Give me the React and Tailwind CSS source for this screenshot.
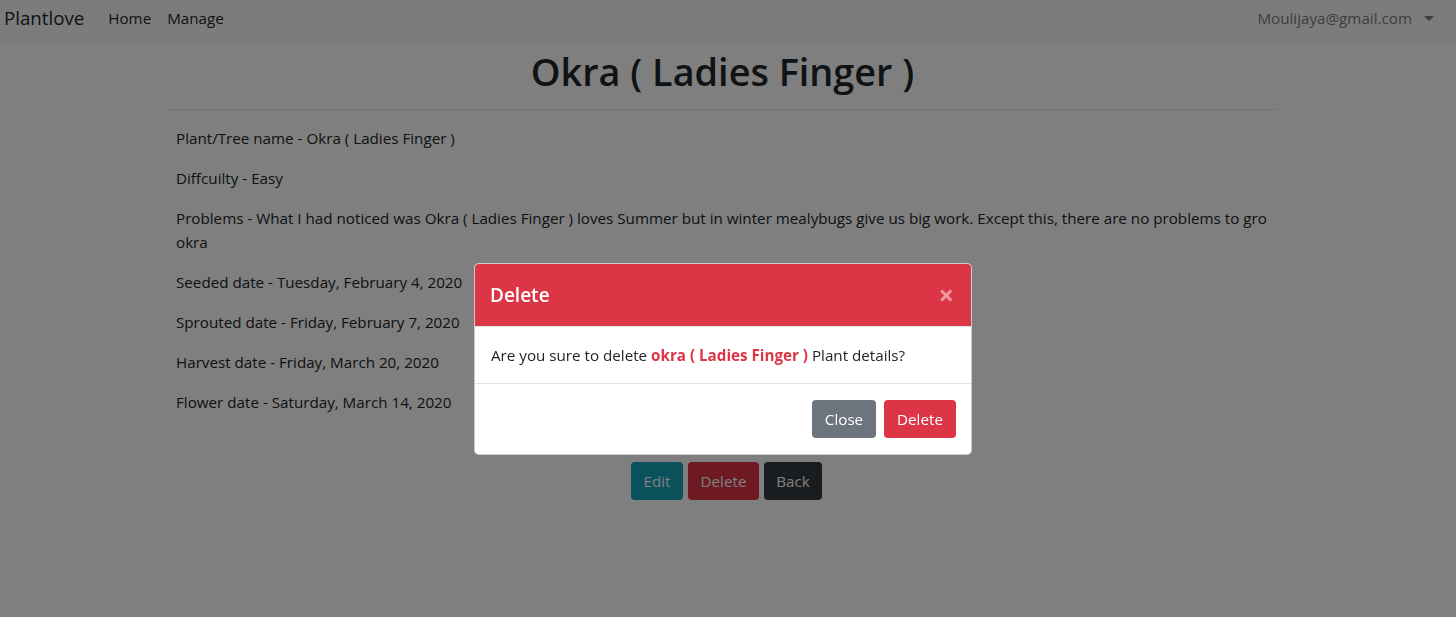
export default function App() {
  const rows = [
    "Plant/Tree name - Okra ( Ladies Finger )",
    "Diffcuilty - Easy",
  ];
  const dates = [
    "Seeded date - Tuesday, February 4, 2020",
    "Sprouted date - Friday, February 7, 2020",
    "Harvest date - Friday, March 20, 2020",
    "Flower date - Saturday, March 14, 2020",
  ];
  return (
    <div className="relative min-h-[617px] bg-white font-['Open_Sans',sans-serif] text-[15.2px] leading-[24px] text-[#212529]">
      <nav className="flex h-[44px] items-center bg-[#f8f9fa] pb-[8px] pl-[4px] pr-[22px]">
        <span className="text-[18.7px] leading-[30px] text-[#212529]">Plantlove</span>
        <span className="ml-[24px] text-[#212529]">Home</span>
        <span className="ml-[16px] text-[#212529]">Manage</span>
        <div className="ml-auto flex items-center text-[#7c7c7c]">
          <span>Moulijaya@gmail.com</span>
          <span className="ml-[12px] mt-[1px] h-0 w-0 border-x-[5px] border-t-[5px] border-x-transparent border-t-[#7c7c7c]"></span>
        </div>
      </nav>

      <div className="ml-[168px] w-[1109px]">
        <h1 className="mt-[4px] text-center text-[37.8px] font-semibold leading-[48px]">Okra ( Ladies Finger )</h1>
        <div className="mt-[13px] h-px bg-[#e6e6e6]"></div>
        <div className="px-[8px] pt-[16px]">
          {rows.map((r) => (
            <p key={r} className="mb-[16px]">{r}</p>
          ))}
          <p className="mb-[16px]">
            <span className="whitespace-nowrap">Problems - What I had noticed was Okra ( Ladies Finger ) loves Summer but in winter mealybugs give us big work. Except this, there are no problems to gro</span>
            <br />
            okra
          </p>
          {dates.map((r) => (
            <p key={r} className="mb-[16px]">{r}</p>
          ))}
        </div>
        <div className="mt-[48px] flex justify-center gap-[5px] pl-[8px]">
          <button className="h-[38px] w-[52px] rounded-[4px] bg-[#17a2b8] text-white">Edit</button>
          <button className="h-[38px] w-[71px] rounded-[4px] bg-[#dc3545] text-white">Delete</button>
          <button className="h-[38px] w-[58px] rounded-[4px] bg-[#343a40] text-white">Back</button>
        </div>
      </div>

      <div className="fixed inset-0 bg-black/50"></div>

      <div className="fixed left-[474px] top-[263px] w-[498px] overflow-hidden rounded-[5px] border border-black/20 bg-white">
        <div className="flex h-[63px] items-center justify-between border-b border-[#dee2e6] bg-[#dc3545] pl-[15px] pr-[17px]">
          <span className="text-[19px] font-semibold leading-[30px] text-white">Delete</span>
          <span className="text-[27px] font-bold leading-[24px] text-white/50">×</span>
        </div>
        <div className="border-b border-[#dee2e6] px-[16px] py-[16px]">
          Are you sure to delete <span className="font-bold text-[#dc3545]">okra ( Ladies Finger )</span> Plant details?
        </div>
        <div className="flex justify-end gap-[8px] px-[15px] pb-[16px] pt-[16px]">
          <button className="h-[38px] w-[64px] rounded-[4px] bg-[#6c757d] text-white">Close</button>
          <button className="h-[38px] w-[72px] rounded-[4px] bg-[#dc3545] text-white">Delete</button>
        </div>
      </div>
    </div>
  );
}
